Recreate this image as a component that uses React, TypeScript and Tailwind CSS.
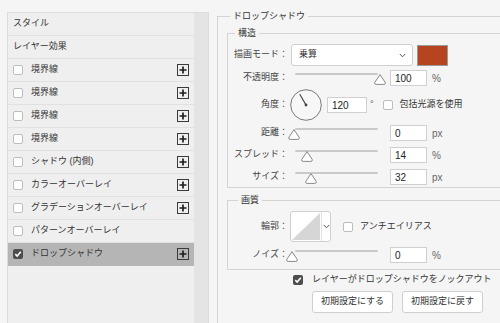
const rows = [
  { label: '境界線', plus: true },
  { label: '境界線', plus: true },
  { label: '境界線', plus: true },
  { label: '境界線', plus: true },
  { label: 'シャドウ (内側)', plus: true },
  { label: 'カラーオーバーレイ', plus: true },
  { label: 'グラデーションオーバーレイ', plus: true },
  { label: 'パターンオーバーレイ', plus: false },
  { label: 'ドロップシャドウ', plus: true, checked: true },
];

function Check({ checked }: { checked?: boolean }) {
  if (checked) {
    return (
      <span className="w-[10px] h-[10px] rounded-[2px] bg-[#4d4d4d] flex items-center justify-center shrink-0">
        <svg width="8" height="8" viewBox="0 0 8 8">
          <path d="M1.3 4.2 L3.2 6 L6.8 1.8" fill="none" stroke="#fff" strokeWidth="1.6" />
        </svg>
      </span>
    );
  }
  return <span className="block w-[10px] h-[10px] rounded-[2px] bg-white border border-[#bdbdbd] shrink-0" />;
}

function PlusBox() {
  return (
    <svg width="12" height="12" viewBox="0 0 12 12">
      <rect x="0.5" y="0.5" width="11" height="11" fill="none" stroke="#3a3a3a" />
      <path d="M6 2.5 V9.5 M2.5 6 H9.5" stroke="#1f1f1f" strokeWidth="1.7" />
    </svg>
  );
}

function Chevron() {
  return (
    <svg width="7" height="5" viewBox="0 0 7 5">
      <path d="M0.8 1 L3.5 3.8 L6.2 1" fill="none" stroke="#555" strokeWidth="1" />
    </svg>
  );
}

function Slider({ knob }: { knob: number }) {
  return (
    <div className="relative w-[102px] h-[16px] shrink-0">
      <div className="absolute left-[7px] right-[12px] top-[3px] h-[2px] rounded bg-[#c9c9c9]" />
      <svg className="absolute top-[4px]" style={{ left: knob - 6 }} width="12" height="11" viewBox="0 0 12 11">
        <path d="M6 0.6 L11.3 8.6 Q11.6 10.4 9.8 10.4 L2.2 10.4 Q0.4 10.4 0.7 8.6 Z" fill="#fff" stroke="#7a7a7a" strokeWidth="0.9" />
      </svg>
    </div>
  );
}

function Field({ value, w = 'w-[37px]' }: { value: string; w?: string }) {
  return (
    <div className={`${w} h-[16px] bg-white border border-[#d0d0d0] pl-[4px] flex items-center text-[10px] text-[#222] shrink-0`}>
      {value}
    </div>
  );
}

function Label({ children }: { children: string }) {
  return <span className="w-[60px] text-right shrink-0 text-[#444]">{children}</span>;
}

function SliderRow({ label, knob, value, unit, mt }: { label: string; knob: number; value: string; unit: string; mt: string }) {
  return (
    <div className={`${mt} h-[16px] flex items-center`}>
      <Label>{label}</Label>
      <Slider knob={knob} />
      <Field value={value} />
      <span className="ml-[5px] text-[10px] text-[#666]">{unit}</span>
    </div>
  );
}

export default function App() {
  return (
    <div className="w-[500px] h-[323px] overflow-hidden bg-[#f5f5f5] flex font-['Liberation_Sans','Noto_Sans_CJK_JP',sans-serif] text-[9px] text-[#333]">
      <div className="ml-[7px] mt-[12px] flex border-t border-l border-r border-[#dcdcdc] shrink-0">
        <div className="w-[186px] bg-[#efefef]">
          <div className="h-[23px] border-b border-[#e1e1e1] flex items-center pl-[5px]">スタイル</div>
          <div className="h-[23px] border-b border-[#e1e1e1] flex items-center pl-[5px]">レイヤー効果</div>
          {rows.map((r, i) => (
            <div
              key={i}
              className={`h-[23px] border-b flex items-center pl-[5px] pr-[5px] ${r.checked ? 'bg-[#b5b5b5] border-[#b5b5b5]' : 'border-[#e1e1e1]'}`}
            >
              <Check checked={r.checked} />
              <span className="ml-[8px] flex-1">{r.label}</span>
              {r.plus && <PlusBox />}
            </div>
          ))}
        </div>
        <div className="w-[14px] bg-[#e4e4e4]" />
      </div>

      <div className="pl-[8px] pt-[10px] shrink-0">
        <fieldset className="w-[300px] h-[330px] border border-[#d4d4d4] px-[9px]">
          <legend className="ml-[3px] px-[3px] leading-[12px]">ドロップシャドウ</legend>

          <fieldset className="mt-[5px] border border-[#d4d4d4] pb-[2px]">
            <legend className="ml-[7px] px-[3px] leading-[12px]">構造</legend>

            <div className="mt-[5px] h-[22px] flex items-center">
              <Label>描画モード：</Label>
              <div className="ml-[3px] w-[122px] h-[22px] bg-white border border-[#cfcfcf] rounded-[3px] flex items-center justify-between pl-[7px] pr-[6px]">
                <span>乗算</span>
                <Chevron />
              </div>
              <div className="ml-[4px] w-[31px] h-[21px] bg-[#b5441f] border border-[#9a9a9a]" />
            </div>

            <SliderRow mt="mt-[4px]" label="不透明度：" knob={92} value="100" unit="%" />

            <div className="mt-[3px] h-[32px] flex items-center">
              <Label>角度：</Label>
              <svg className="ml-[2px] shrink-0" width="32" height="32" viewBox="0 0 32 32">
                <circle cx="16" cy="16" r="15.3" fill="#f7f7f7" stroke="#6a6a6a" strokeWidth="0.9" />
                <path d="M16 16 L9.8 5.3" stroke="#444" strokeWidth="1.2" />
                <circle cx="16" cy="16" r="1.4" fill="#444" />
              </svg>
              <div className="ml-[5px]">
                <Field value="120" w="w-[40px]" />
              </div>
              <span className="ml-[3px] text-[#555]">°</span>
              <div className="ml-[9px]">
                <Check />
              </div>
              <span className="ml-[7px]">包括光源を使用</span>
            </div>

            <SliderRow mt="mt-[4px]" label="距離：" knob={6} value="0" unit="px" />
            <SliderRow mt="mt-[6px]" label="スプレッド：" knob={19} value="14" unit="%" />
            <SliderRow mt="mt-[6px]" label="サイズ：" knob={23} value="32" unit="px" />
          </fieldset>

          <fieldset className="mt-[6px] border border-[#d4d4d4] pb-[6px]">
            <legend className="ml-[10px] px-[3px] leading-[12px]">画質</legend>

            <div className="mt-[5px] h-[31px] flex items-center">
              <Label>輪郭：</Label>
              <div className="ml-[2px] w-[41px] h-[31px] bg-white border border-[#cfcfcf] rounded-[3px] flex overflow-hidden shrink-0">
                <svg width="30" height="29" viewBox="0 0 30 29" className="shrink-0">
                  <path d="M1 28 L29 1 L29 28 Z" fill="#d6d6d6" />
                </svg>
                <div className="flex-1 border-l border-[#e2e2e2] flex items-center justify-center">
                  <Chevron />
                </div>
              </div>
              <div className="ml-[12px]">
                <Check />
              </div>
              <span className="ml-[7px]">アンチエイリアス</span>
            </div>

            <SliderRow mt="mt-[5px]" label="ノイズ：" knob={4} value="0" unit="%" />
          </fieldset>

          <div className="mt-[4px] h-[12px] flex items-center pl-[66px]">
            <Check checked />
            <span className="ml-[9px]">レイヤーがドロップシャドウをノックアウト</span>
          </div>

          <div className="mt-[5px] flex gap-[9px] pl-[85px]">
            <div className="w-[81px] h-[22px] bg-white border border-[#cfcfcf] rounded-[3px] flex items-center justify-center">初期設定にする</div>
            <div className="w-[81px] h-[22px] bg-white border border-[#cfcfcf] rounded-[3px] flex items-center justify-center">初期設定に戻す</div>
          </div>
        </fieldset>
      </div>
    </div>
  );
}
